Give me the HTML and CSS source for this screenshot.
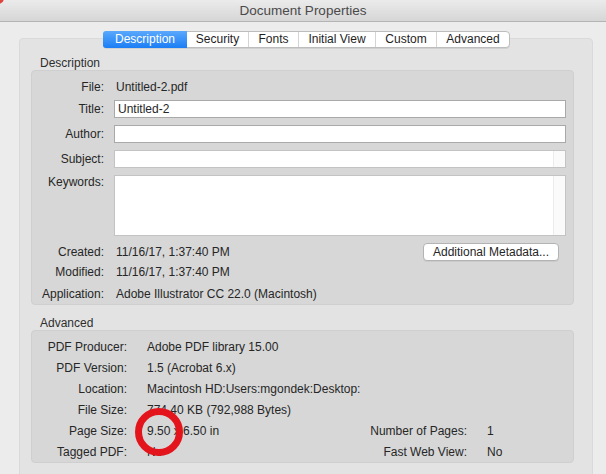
FILE: index.html
```html
<!DOCTYPE html>
<html>
<head>
<meta charset="utf-8">
<link rel="stylesheet" href="styles.css">
</head>
<body>
<div class="window">
  <span class="close-dot"></span>
  <div class="titlebar">Document Properties</div>
  <div class="content">
    <div class="tabs">
      <div class="tab active">Description</div>
      <div class="tab">Security</div>
      <div class="tab">Fonts</div>
      <div class="tab">Initial View</div>
      <div class="tab">Custom</div>
      <div class="tab last">Advanced</div>
    </div>
    <div class="panel">
      <div class="section-label">Description</div>
      <div class="box desc">
        <div class="row r-file"><span class="lbl">File:</span><span class="val">Untitled-2.pdf</span></div>
        <div class="row r-input"><span class="lbl">Title:</span><div class="field dark">Untitled-2</div></div>
        <div class="row r-input"><span class="lbl">Author:</span><div class="field dark"></div></div>
        <div class="row r-input"><span class="lbl">Subject:</span><div class="field light"><span class="scroll"></span></div></div>
        <div class="row r-area"><span class="lbl">Keywords:</span><div class="field light area"><span class="scroll"></span></div></div>
        <div class="row r-created"><span class="lbl">Created:</span><span class="val">11/16/17, 1:37:40 PM</span><button class="btn">Additional Metadata...</button></div>
        <div class="row r-mod"><span class="lbl">Modified:</span><span class="val">11/16/17, 1:37:40 PM</span></div>
        <div class="row r-mod"><span class="lbl">Application:</span><span class="val">Adobe Illustrator CC 22.0 (Macintosh)</span></div>
      </div>
      <div class="section-label adv-label">Advanced</div>
      <div class="box adv">
        <span class="albl">PDF Producer:</span><span class="aval span3">Adobe PDF library 15.00</span>
        <span class="albl">PDF Version:</span><span class="aval span3">1.5 (Acrobat 6.x)</span>
        <span class="albl">Location:</span><span class="aval span3">Macintosh HD:Users:mgondek:Desktop:</span>
        <span class="albl">File Size:</span><span class="aval span3">774.40 KB (792,988 Bytes)</span>
        <span class="albl">Page Size:</span><span class="aval">9.50 x 6.50 in</span><span class="albl">Number of Pages:</span><span class="aval">1</span>
        <span class="albl">Tagged PDF:</span><span class="aval">No</span><span class="albl">Fast Web View:</span><span class="aval">No</span>
      </div>
    </div>
  </div>
  <span class="red-circle"></span>
</div>
</body>
</html>
```
FILE: styles.css
```css
* { box-sizing: border-box; }
html, body { margin: 0; padding: 0; }
body {
  width: 606px;
  height: 474px;
  overflow: hidden;
  background: #ececec;
  font-family: "Liberation Sans", Arial, sans-serif;
  font-size: 12px;
  color: #262626;
}
.window { position: relative; width: 606px; height: 474px; overflow: hidden; }
.close-dot {
  position: absolute; left: -8px; top: -8px;
  width: 12px; height: 12px; border-radius: 50%;
  background: #e0443e; z-index: 3;
}
.titlebar {
  height: 22px;
  background: linear-gradient(#ebebeb, #d6d6d6);
  border-bottom: 1px solid #b4b4b4;
  text-align: center;
  font-size: 13.5px;
  line-height: 21px;
  color: #4a4a4a;
}
.content { padding: 9px 13px 0 19px; }
.tabs {
  position: relative; z-index: 2;
  display: flex;
  margin-left: 84px;
  width: 407px;
  height: 17px;
  background: #fff;
  border: 1px solid #bdbdbd;
  border-radius: 4px;
  box-shadow: 0 1px 0 rgba(0,0,0,0.08);
}
.tab {
  height: 15px;
  line-height: 15px;
  text-align: center;
  border-right: 1px solid #d4d4d4;
  color: #1e1e1e;
}
.tab:nth-child(1) { width: 83px; }
.tab:nth-child(2) { width: 62px; }
.tab:nth-child(3) { width: 50px; }
.tab:nth-child(4) { width: 77px; }
.tab:nth-child(5) { width: 61px; }
.tab.last { flex: 1; border-right: none; }
.tab.active {
  background: linear-gradient(#5aa8fc, #1b7ef5);
  color: #fff;
  border-radius: 3px 0 0 3px;
  border-right: none;
  margin: -1px 0 -1px -1px;
  height: 17px;
  line-height: 17px;
  width: 84px;
}
.panel {
  margin-top: -10px;
  height: 450px;
  background: #e3e3e3;
  border: 1px solid #dadada;
  border-radius: 4px;
  padding: 16px 19px 0 11px;
}
.section-label {
  padding-left: 9px;
  height: 16px;
  line-height: 16px;
  color: #2e2e2e;
}
.box {
  width: 543px;
  background: #d7d7d7;
  border: 1px solid #cfcfcf;
  border-radius: 4px;
}
.desc {
  margin-top: -1px;
  height: 235px;
  padding: 8px 7px 0 0;
  display: flex;
  flex-direction: column;
}
.row { display: flex; align-items: center; }
.lbl { width: 72px; text-align: right; flex-shrink: 0; }
.val { margin-left: 12px; }
.r-file { height: 16px; }
.r-input { height: 18px; margin-top: 5px; }
.r-input + .r-input { margin-top: 7px; }
.r-area { height: 61px; margin-top: 7px; align-items: flex-start; }
.r-area .lbl { margin-top: -1px; line-height: 16px; }
.field {
  position: relative;
  margin-left: 10px;
  flex: 1;
  height: 18px;
  background: #fff;
  padding-left: 3px;
  line-height: 16px;
}
.field.dark { border: 1px solid #a9a9a9; }
.field.light { border: 1px solid #c3c3c3; }
.field.area { height: 61px; }
.scroll {
  position: absolute; right: 0; top: 0; bottom: 0;
  width: 12px;
  background: #fafafa;
  border-left: 1px solid #ececec;
}
.r-created { height: 18px; margin-top: 7px; }
.btn {
  margin-left: auto;
  margin-right: 7px;
  width: 136px;
  height: 18px;
  padding: 0;
  background: #fff;
  border: 1px solid #b3b3b3;
  border-radius: 4px;
  font-family: "Liberation Sans", Arial, sans-serif;
  font-size: 12px;
  color: #262626;
  box-shadow: 0 1px 0 rgba(0,0,0,0.06);
}
.r-mod { height: 16px; margin-top: 3px; }
.r-mod + .r-mod { margin-top: 6px; }
.adv-label { margin-top: 10px; }
.adv {
  margin-top: -1px;
  height: 133px;
  padding-top: 5px;
  display: grid;
  grid-template-columns: 95px 200px 100px auto;
  grid-auto-rows: 21px;
  column-gap: 20px;
  align-items: center;
}
.albl { text-align: right; white-space: nowrap; }
.aval { white-space: nowrap; }
.span3 { grid-column: span 3; }
.red-circle {
  position: absolute;
  left: 135px;
  top: 408px;
  width: 48px;
  height: 48px;
  border-radius: 50%;
  border: 7px solid #e4141c;
  filter: blur(0.5px);
}
```
